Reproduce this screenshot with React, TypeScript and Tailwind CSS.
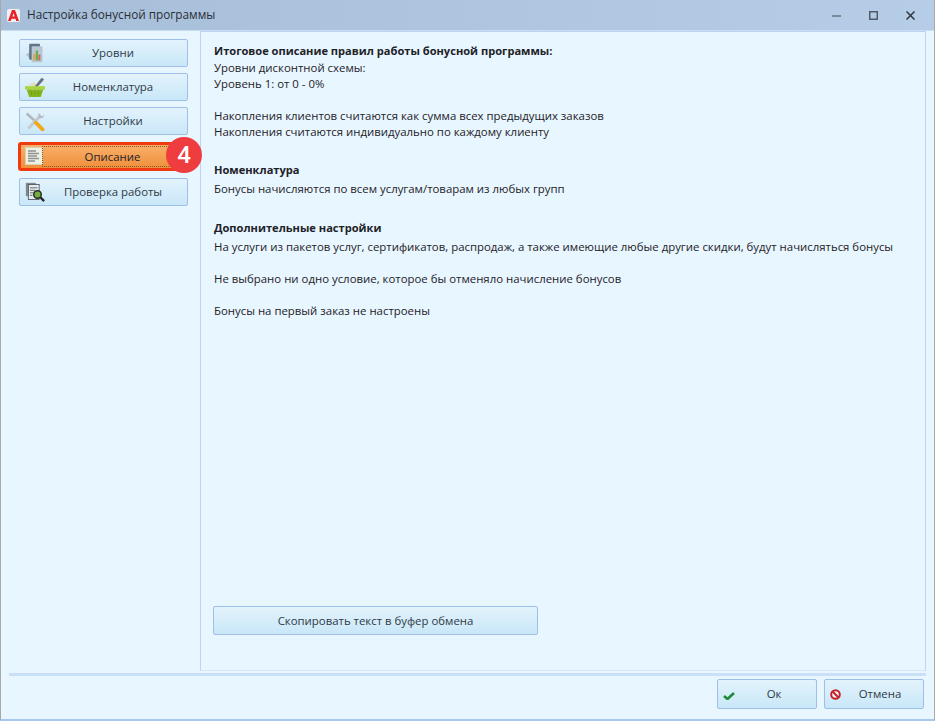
import type { ReactNode } from 'react';

const btn =
  'relative flex items-center justify-center rounded-[2px] border border-[#9dbfe8] bg-gradient-to-b from-[#e3f3fc] to-[#c9e7f8] text-[#2f3a45]';

function LevelsIcon() {
  return (
    <svg width="20" height="20" viewBox="0 0 24 24">
      <path d="M1 14 L8 9 V20 Z" fill="#aebfce" />
      <rect x="5" y="1" width="13" height="19" rx="1" fill="#5f7689" />
      <rect x="8" y="4" width="13" height="19" rx="1" fill="#b9c6d3" />
      <rect x="10" y="13" width="2.5" height="8" fill="#d9a441" />
      <rect x="13" y="9" width="2.5" height="12" fill="#6cab4c" />
      <rect x="16" y="14" width="2.5" height="7" fill="#cf6b5c" />
    </svg>
  );
}

function BasketIcon() {
  return (
    <svg width="20" height="20" viewBox="0 0 24 24">
      <path d="M3 10 L11 6 L15 11 Z" fill="#e6dcb8" />
      <path d="M11 12 L20 1 L23 3 L14 13 Z" fill="#69737c" />
      <path d="M0 11 H24 V15 H0 Z" fill="#a9d63c" />
      <path d="M2 15 H22 L19 24 H5 Z" fill="#83b51f" />
      <path d="M8 17 V22 M12 17 V22 M16 17 V22" stroke="#6f9d18" strokeWidth="1.2" />
    </svg>
  );
}

function ToolsIcon() {
  return (
    <svg width="20" height="20" viewBox="0 0 24 24">
      <path d="M2 3 L13 13" stroke="#aeb6bd" strokeWidth="3" />
      <path d="M4 21 L18 6" stroke="#c3c9ce" strokeWidth="3.5" />
      <path d="M16 2 L21 7 L23 3 L22 8 L17 9 Z" fill="#b3bac1" />
      <path d="M13 14 L21 22" stroke="#f0a81c" strokeWidth="4.5" strokeLinecap="round" />
    </svg>
  );
}

function DocIcon() {
  return (
    <svg width="18" height="18" viewBox="0 0 18 18">
      <rect x="0.5" y="0.5" width="17" height="17" fill="#f1efe2" stroke="#d8d2b4" />
      <path d="M3 4 H11 M3 6.5 H14 M3 9 H12 M3 11.5 H14 M3 14 H10" stroke="#8c9196" strokeWidth="1.5" />
    </svg>
  );
}

function CheckDocIcon() {
  return (
    <svg width="20" height="20" viewBox="0 0 24 24">
      <rect x="1" y="1" width="12" height="16" fill="#7f8a93" />
      <rect x="4" y="3" width="13" height="18" fill="#e8ecef" stroke="#47505a" />
      <path d="M6 7 H15 M6 10 H12 M6 13 H10 M6 16 H9" stroke="#47505a" />
      <circle cx="15" cy="15" r="4.5" fill="#76ad3f" stroke="#252c2a" strokeWidth="1.8" />
      <path d="M18.5 18.5 L23 23" stroke="#252c2a" strokeWidth="2.8" />
    </svg>
  );
}

function NavButton({ icon, label }: { icon: ReactNode; label: string }) {
  return (
    <div className={`${btn} h-[28px] w-[169px]`}>
      <span className="absolute left-[5px] top-[3px]">{icon}</span>
      <span className="pl-[19px]">{label}</span>
    </div>
  );
}

export default function App() {
  return (
    <div className="flex h-[721px] w-[935px] flex-col border-x border-b-2 border-x-[#a8a8a8] border-b-[#a9c8ee] bg-[#e8f6ff] font-['Open_Sans','Noto_Sans',sans-serif] text-[11.4px] text-[#1e2228]">
      <header className="flex h-[30px] shrink-0 items-center bg-gradient-to-r from-[#a7bed9] to-[#b6cde7] pl-[6px] shadow-[0_1px_0_#c8dcf2]">
        <svg width="13" height="13" viewBox="0 0 13 13" className="rounded-[2px] bg-[#f0f0f0]">
          <path d="M1 12 L5 1 H8 L12 12 H9.2 L8.5 9.8 H4.5 L3.8 12 Z M5.4 7.6 H7.6 L6.5 4 Z" fill="#e8202a" fillRule="evenodd" />
        </svg>
        <span className="ml-[7px] flex-1 text-[11.75px] text-[#2a3038]">Настройка бонусной программы</span>
        <div className="flex items-center gap-[28px] pr-[19px]">
          <svg width="9" height="9" viewBox="0 0 9 9"><path d="M0 5 H9" stroke="#6b7885" strokeWidth="1.6" /></svg>
          <svg width="9" height="9" viewBox="0 0 9 9"><rect x="0.75" y="0.75" width="7.5" height="7.5" fill="none" stroke="#4f5b67" strokeWidth="1.5" /></svg>
          <svg width="9" height="9" viewBox="0 0 9 9"><path d="M0.5 0.5 L8.5 8.5 M8.5 0.5 L0.5 8.5" stroke="#2f3640" strokeWidth="1.5" /></svg>
        </div>
      </header>

      <main className="flex min-h-0 flex-1">
        <aside className="flex w-[199px] shrink-0 flex-col gap-[6px] pl-[18px] pt-[9px]">
          <NavButton icon={<LevelsIcon />} label="Уровни" />
          <NavButton icon={<BasketIcon />} label="Номенклатура" />
          <NavButton icon={<ToolsIcon />} label="Настройки" />
          <div className="relative my-px ml-[-1px] flex h-[29px] w-[171px] items-center justify-center rounded-[3px] border-[3px] border-[#f23a10] bg-gradient-to-b from-[#f8b066] to-[#ef8f3c]">
            <span className="absolute left-[4px] top-[2px]"><DocIcon /></span>
            <span className="absolute bottom-[1px] left-[21px] right-[1px] top-[1px] border border-dotted border-[#7a5a30]" />
            <span className="relative pl-[18px] pt-px">Описание</span>
            <span className="absolute right-[-16px] top-[-8px] flex h-[36px] w-[36px] items-center justify-center rounded-full bg-[#ef3c3f] font-['Roboto',sans-serif] text-[24px] font-medium text-white">4</span>
          </div>
          <NavButton icon={<CheckDocIcon />} label="Проверка работы" />
        </aside>

        <section className="mb-[2px] mr-[8px] mt-[1px] flex flex-1 flex-col border border-[#bcd4f2] border-b-[#d6e6f8] pl-[13px] pt-[11px] leading-[16px]">
          <p className="text-[11.1px] font-bold">Итоговое описание правил работы бонусной программы:</p>
          <p className="mt-px">Уровни дисконтной схемы:</p>
          <p>Уровень 1: от 0 - 0%</p>
          <p className="mt-[16px]">Накопления клиентов считаются как сумма всех предыдущих заказов</p>
          <p>Накопления считаются индивидуально по каждому клиенту</p>
          <p className="mt-[22px] text-[11.1px] font-bold">Номенклатура</p>
          <p className="mt-[3px]">Бонусы начисляются по всем услугам/товарам из любых групп</p>
          <p className="mt-[23px] text-[11.1px] font-bold">Дополнительные настройки</p>
          <p className="mt-[3px]">На услуги из пакетов услуг, сертификатов, распродаж, а также имеющие любые другие скидки, будут начисляться бонусы</p>
          <p className="mt-[16px]">Не выбрано ни одно условие, которое бы отменяло начисление бонусов</p>
          <p className="mt-[16px]">Бонусы на первый заказ не настроены</p>
          <div className={`${btn} mb-[35px] ml-[-1px] mt-auto h-[29px] w-[325px]`}>Скопировать текст в буфер обмена</div>
        </section>
      </main>

      <footer className="flex h-[46px] shrink-0 flex-col">
        <div className="ml-[8px] mr-[8px] h-[3px] bg-[#c9e0f8]" />
        <div className="flex justify-end gap-[7px] pr-[10px] pt-[3px]">
          <div className={`${btn} h-[30px] w-[100px]`}>
            <svg width="12" height="8" viewBox="0 0 12 8" className="absolute left-[5px] top-[12px]">
              <path d="M1 4 L4.5 7 L11 1" fill="none" stroke="#1f8a3a" strokeWidth="2.6" />
            </svg>
            <span className="pl-[14px]">Ок</span>
          </div>
          <div className={`${btn} h-[30px] w-[100px]`}>
            <svg width="11" height="11" viewBox="0 0 11 11" className="absolute left-[5px] top-[9px]">
              <circle cx="5.5" cy="5.5" r="4.3" fill="#f3f3f3" stroke="#c5202c" strokeWidth="2" />
              <path d="M2.5 2.5 L8.5 8.5" stroke="#c5202c" strokeWidth="2" />
            </svg>
            <span className="pl-[12px]">Отмена</span>
          </div>
        </div>
      </footer>
    </div>
  );
}
